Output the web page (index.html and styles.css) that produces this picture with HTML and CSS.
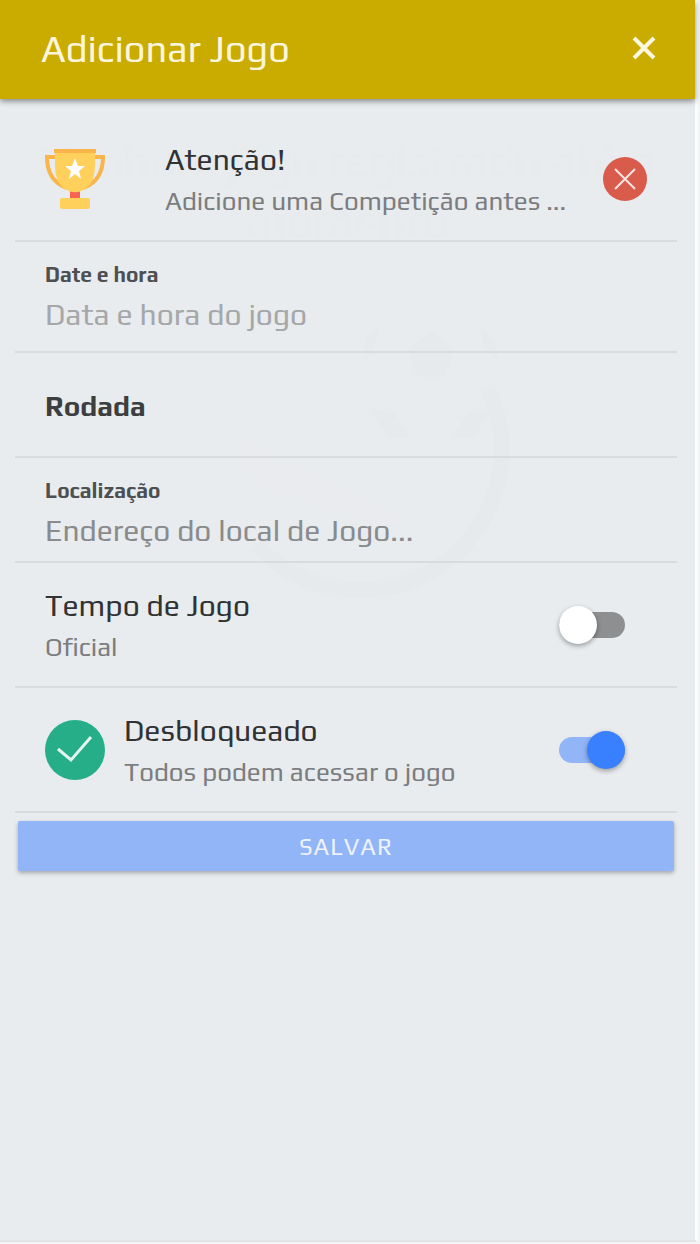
FILE: index.html
```html
<!DOCTYPE html>
<html lang="pt-BR">
<head>
  <meta charset="UTF-8" />
  <meta name="viewport" content="width=device-width, initial-scale=1" />
  <title>Adicionar Jogo</title>
  <link rel="stylesheet" href="styles.css">
</head>
<body>
  <div class="modal">
    <header class="toolbar">
      <h1>Adicionar Jogo</h1>
      <button type="button" class="close" aria-label="Fechar">
        <svg viewBox="0 0 26 26"><path d="M3 3l20 20M23 3L3 23" /></svg>
      </button>
    </header>

    <form class="content">
      <!-- empty list of the page behind the modal, almost faded out -->
      <div class="ghost" aria-hidden="true">
        <div class="ghost-text">Nenhum jogo registrado até o momento</div>
        <svg viewBox="0 0 324 300">
          <g transform="translate(24 0)">
            <path class="ring" d="M278 90a141 141 0 0 1-232 155" />
            <path d="M198 50l23-17 23 17-9 28h-28zM158 108l26 6 16 24-20 2zM284 108l-26 6-16 24 20 2zM155 40l15-12-8 24-8 10zM270 28l14 14 4 20-14-14z" />
            <path class="streak" d="M22 130l30 20 150 70-30 6-110-30-45-36z" />
          </g>
        </svg>
      </div>

      <div class="item">
        <svg class="icon trophy" viewBox="0 0 60 60">
          <path class="handle" d="M11 8H2c0 16 6 26 20 31M49 8h9c0 16-6 26-20 31" />
          <path class="stem" d="M25 42h10v8H25z" />
          <path class="gold" d="M10 2h40v14c0 14-5 22-12 25-4 3-12 3-16 0-7-3-12-11-12-25z" />
          <path class="rim" d="M9 0h42v4H9z" />
          <path class="star" d="M30 9l3 8h7l-6 5 2 8-6-5-6 5 2-8-6-5h7z" />
          <rect class="gold" x="15" y="49" width="30" height="11" rx="2" />
        </svg>
        <div class="text wide">
          <h2>Atenção!</h2>
          <p>Adicione uma Competição antes ...</p>
        </div>
        <svg class="badge" viewBox="0 0 44 44">
          <circle cx="22" cy="22" r="22" />
          <path d="M12 12l20 20M32 12L12 32" />
        </svg>
      </div>

      <div class="item field">
        <label for="date">Date e hora</label>
        <input type="text" id="date" class="date" placeholder="Data e hora do jogo" />
      </div>

      <div class="item inline">
        <label for="round">Rodada</label>
        <input type="text" id="round" />
      </div>

      <div class="item field place">
        <label for="place">Localização</label>
        <input type="text" id="place" placeholder="Endereço do local de Jogo..." />
      </div>

      <div class="item">
        <label class="text" for="time">
          <span class="title">Tempo de Jogo</span>
          <span class="note">Oficial</span>
        </label>
        <input type="checkbox" class="toggle" id="time" />
      </div>

      <div class="item">
        <svg class="icon check" viewBox="0 0 60 60">
          <circle cx="30" cy="30" r="30" />
          <path d="M13 29l13 11 20-23" />
        </svg>
        <label class="text" for="unlocked">
          <span class="title">Desbloqueado</span>
          <span class="note">Todos podem acessar o jogo</span>
        </label>
        <input type="checkbox" class="toggle" id="unlocked" checked />
      </div>

      <button type="submit" class="save">SALVAR</button>
    </form>
  </div>
</body>
</html>
```
FILE: styles.css
```css
* {
  box-sizing: border-box;
}
body {
  margin: 0;
  background-color: #f3f4f5;
  color: #303234;
  font-family: Play, "Noto Sans", sans-serif;
}
.modal {
  display: flex;
  flex-direction: column;
  min-height: calc(100vh - 2px);
  margin-right: 2px;
  border-right: 3px solid #fbfcfc;
  border-bottom: 2px solid #e2e4e7;
  background-color: #e8ecef;
}
.toolbar {
  display: flex;
  align-items: center;
  justify-content: space-between;
  height: 99px;
  padding: 0 36px 4px 41px;
  background-color: #caab00;
  box-shadow: 0 2px 6px rgba(0, 0, 0, 0.45);
  color: #faf5dc;
}
h1 {
  margin: 0;
  font-size: 38px;
  font-weight: 400;
  line-height: 44px;
}
.close {
  width: 30px;
  height: 30px;
  padding: 2px;
  border: none;
  background: none;
  cursor: pointer;
}
.close svg {
  display: block;
  fill: none;
  stroke: #fbf7e0;
  stroke-width: 4;
}
.content {
  position: relative;
  padding: 18px 18px 0 15px;
}
.ghost {
  position: absolute;
  top: 32px;
  left: 0;
  right: 0;
  pointer-events: none;
}
.ghost-text {
  color: #e7ebed;
  font-size: 46px;
  line-height: 60px;
  text-align: center;
}
.ghost svg {
  display: block;
  width: 324px;
  margin: 48px auto 0;
}
.ghost path {
  fill: #e7eaed;
}
.ghost .ring {
  fill: none;
  stroke: #e7eaed;
  stroke-width: 16;
}
.ghost .streak {
  fill: #e9ebee;
}
.item {
  position: relative;
  display: flex;
  align-items: center;
  height: 125px;
  padding: 0 30px;
  border-bottom: 2px solid #d8dcdf;
}
.item:last-of-type {
  margin-bottom: 8px;
}
.icon {
  flex: none;
  width: 60px;
  height: 60px;
  margin-right: 19px;
}
.handle {
  fill: none;
  stroke: #f9b54c;
  stroke-width: 4;
}
.gold {
  fill: #ffd05b;
}
.rim {
  fill: #f9b54c;
}
.stem {
  fill: #f8644c;
}
.star {
  fill: #fff;
}
.text {
  display: flex;
  flex: 1;
  flex-direction: column;
  gap: 7px;
  min-width: 0;
  padding-top: 3px;
}
.wide {
  margin-left: 41px;
}
h2, .title {
  margin: 0;
  font-size: 30px;
  font-weight: 400;
  line-height: 34px;
}
p, .note {
  margin: 0;
  color: #7b7d7f;
  font-size: 26px;
  line-height: 34px;
  white-space: nowrap;
}
.badge {
  flex: none;
  width: 44px;
  height: 44px;
}
.badge circle {
  fill: #d95b4b;
}
.badge path, .check path {
  fill: none;
  stroke: #f6e4e2;
  stroke-width: 2;
}
.check circle {
  fill: #26ae88;
}
.check path {
  stroke: #e2f5ef;
  stroke-width: 3;
}
.field {
  flex-direction: column;
  align-items: stretch;
  height: 111px;
  padding-top: 20px;
}
.place, .inline {
  height: 105px;
}
.inline {
  padding-top: 3px;
}
.field label {
  color: #4d4f51;
  font-size: 21px;
  font-weight: 700;
  line-height: 26px;
}
.inline label {
  color: #3c3e40;
  font-size: 28px;
  font-weight: 700;
}
.item input[type="text"] {
  flex: none;
  width: 100%;
  height: 40px;
  margin-top: 6px;
  padding: 0;
  border: none;
  outline: none;
  background: none;
  color: inherit;
  font: inherit;
  font-size: 30px;
}
.item.inline input {
  flex: 1;
  min-width: 0;
  margin: 0 0 0 16px;
}
input::placeholder {
  color: #898b8d;
  opacity: 1;
}
.date::placeholder {
  color: #a5a7a9;
}
.toggle {
  display: flex;
  flex: none;
  align-items: center;
  width: 66px;
  height: 26px;
  margin: 0 22px 0 0;
  border-radius: 13px;
  background-color: #8e8f91;
  appearance: none;
  cursor: pointer;
}
.toggle::before {
  width: 38px;
  height: 38px;
  border-radius: 50%;
  background-color: #fff;
  box-shadow: 0 2px 5px rgba(0, 0, 0, 0.35);
  content: "";
}
.toggle:checked {
  justify-content: flex-end;
  background-color: #91b5f7;
}
.toggle:checked::before {
  background-color: #3880ff;
}
.save {
  display: block;
  width: calc(100% - 6px);
  height: 50px;
  margin: 0 3px;
  border: none;
  border-radius: 2px;
  background-color: #91b5f7;
  box-shadow: 0 2px 4px rgba(0, 0, 0, 0.3);
  color: #edf2fb;
  font-family: inherit;
  font-size: 24px;
  letter-spacing: 1px;
  cursor: pointer;
}
```
